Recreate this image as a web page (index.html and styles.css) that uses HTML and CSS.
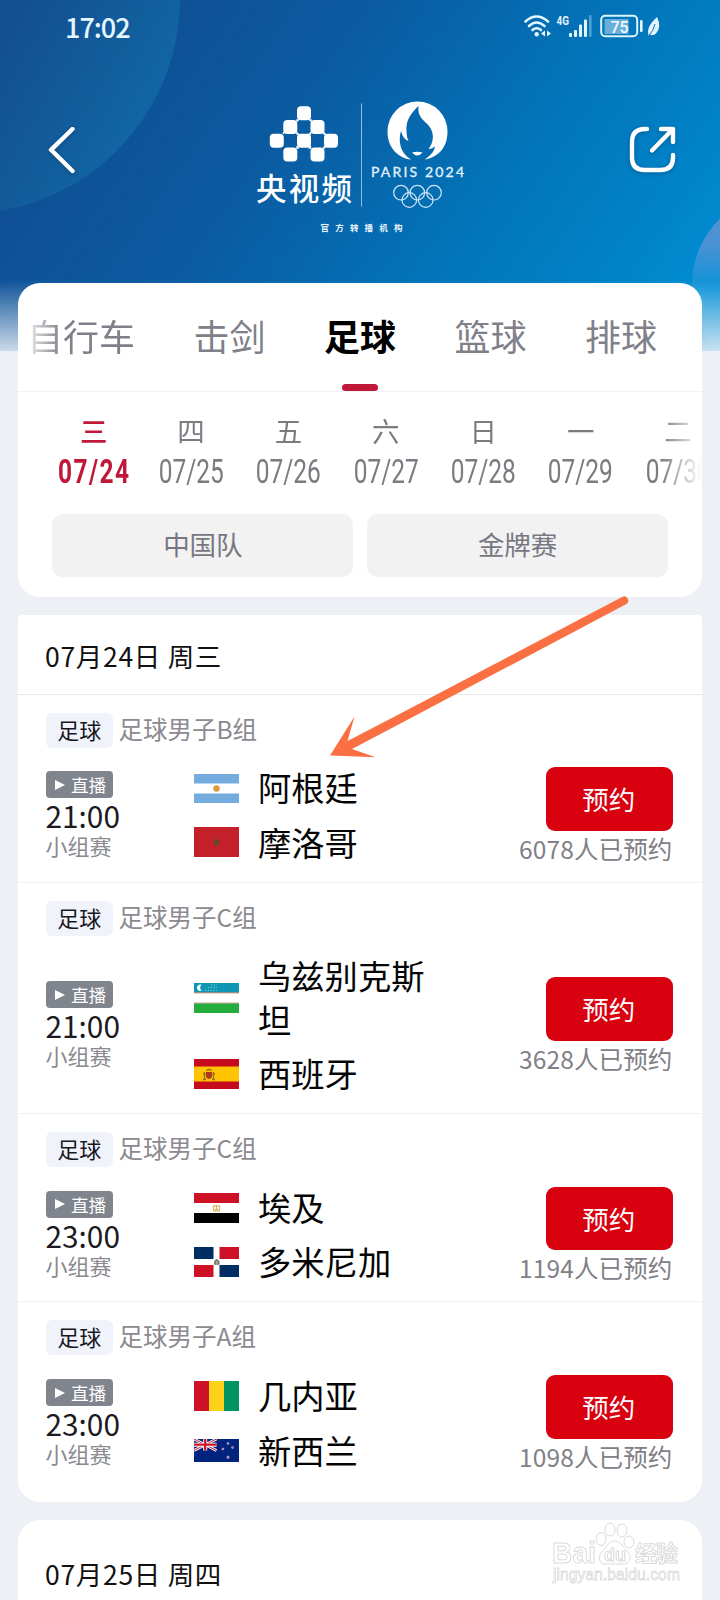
FILE: index.html
```html
<!DOCTYPE html>
<html lang="zh-CN">
<head>
<meta charset="utf-8">
<title>央视频 足球赛程</title>
<link rel="stylesheet" href="styles.css">
</head>
<body>
<div class="screen">
  <header class="hero">
    <svg class="hero-bg" width="720" height="352" viewBox="0 0 720 352">
      <defs>
        <linearGradient id="sky" gradientUnits="userSpaceOnUse" x1="120" y1="60" x2="600" y2="400">
          <stop offset="0" stop-color="#0f5096"/><stop offset=".3" stop-color="#0b5ba1"/><stop offset=".6" stop-color="#0371b6"/><stop offset="1" stop-color="#008acf"/>
        </linearGradient>
        <linearGradient id="orbL" gradientUnits="userSpaceOnUse" x1="10" y1="20" x2="150" y2="100">
          <stop offset="0" stop-color="#134f92"/><stop offset="1" stop-color="#1165a2"/>
        </linearGradient>
        <linearGradient id="orbR" x1="0" y1="0" x2="0" y2="1">
          <stop offset="0" stop-color="#5a90d2"/><stop offset=".28" stop-color="#4a92d4"/><stop offset=".52" stop-color="#0a93d8"/><stop offset="1" stop-color="#0a93d8"/>
        </linearGradient>
        <linearGradient id="fade" x1="0" y1="0" x2="0" y2="1">
          <stop offset="0" stop-color="#edf1f6" stop-opacity="0"/><stop offset="1" stop-color="#edf1f6" stop-opacity=".85"/>
        </linearGradient>
      </defs>
      <rect width="720" height="352" fill="url(#sky)"/>
      <circle cx="-36" cy="-2" r="216" fill="url(#orbL)"/>
      <circle cx="785" cy="285" r="93" fill="url(#orbR)"/>
      <rect y="280" width="720" height="71" fill="url(#fade)"/>
      <rect y="351" width="720" height="1" fill="#edf1f6"/>
    </svg>
    <div class="statusbar">
      <span class="clock">17:02</span>
      <svg class="status-icons" width="140" height="28" viewBox="0 0 140 28">
        <g fill="none" stroke="#e4f6ff" stroke-width="2.6" stroke-linecap="round">
          <path d="M2.500 8.500Q13.500-1.500 25 8.500"/><path d="M6 13Q13.500 6 21.500 13"/><path d="M9.500 17Q13.500 13.500 18 17"/>
        </g>
        <g fill="#e4f6ff">
          <circle cx="13.700" cy="21.300" r="2.200"/>
          <path d="M22 17.500v6l-4-3zM24 17.500v6l4-3z"/>
          <rect x="46" y="20" width="3" height="4" rx="1"/><rect x="51" y="17" width="3" height="7" rx="1"/><rect x="56" y="11.500" width="3" height="12.500" rx="1"/><rect x="61" y="6.500" width="3" height="17.500" rx="1"/>
          <rect x="66" y="2" width="2.600" height="22" rx="1" opacity=".35"/>
          <rect x="81.500" y="6" width="24" height="15" opacity=".45"/>
          <rect x="117" y="7" width="2.600" height="12" rx="1"/>
          <path d="M134 4Q139 14 133 20.500Q130 23.500 126.500 21.500L125.500 23Q122.500 14 134 4z"/>
        </g>
        <path d="M126 22.500Q130.500 18 132 11" stroke="#0a72ba" stroke-width="1" fill="none"/>
        <rect x="78.200" y="2.700" width="36" height="20.600" rx="4" fill="none" stroke="#dcf5f8" stroke-width="2"/>
        <text x="33.500" y="11.500" class="net" textLength="12.500" lengthAdjust="spacingAndGlyphs">4G</text>
        <text x="87.500" y="19.500" class="pct">75</text>
      </svg>
    </div>
    <div class="navbar">
      <svg class="back" width="28" height="48" viewBox="0 0 28 48"><path d="M24.500 2L3 22.800 24.500 44" fill="none" stroke="#fff" stroke-width="4.400" stroke-linecap="round" stroke-linejoin="round"/></svg>
      <svg class="brand" width="220" height="140" viewBox="250 95 220 140">
        <g fill="#fff">
          <rect x="297" y="106.300" width="14" height="14" rx="4"/><rect x="283.300" y="120" width="14" height="14" rx="4"/><rect x="310.500" y="120" width="14" height="14" rx="4"/><rect x="269.800" y="133.800" width="14" height="14" rx="4"/><rect x="297" y="133.800" width="14" height="14" rx="4"/><rect x="324" y="133.800" width="14" height="14" rx="4"/><rect x="283.300" y="147.500" width="14" height="14" rx="4"/><rect x="310.500" y="147.500" width="14" height="14" rx="4"/>
        </g>
        <path d="M299 120h-2v2M309 120h2v2M297 132v2h2M310.500 132v2h-2M297 146v2h2M310.500 146v2h-2M324 132v2h2M324 149v-2h2M283.500 132v2" fill="none" stroke="#fff" stroke-width="1.400"/>
        <text x="256" y="200" class="cctv" textLength="96">央视频</text>
        <path d="M361.500 103.500v103" stroke="#8dbde0" stroke-width="1"/>
        <path d="M410 159.500C396 157 387.500 146 387.500 131.500A30 30 0 0 1 447.500 131.500C447.500 146 440 157 424.500 159.500C432 155 434.500 150 435 146.500Q431.500 149 428.500 149C434 142 434.500 133 429 126C424 120 417 117 418.500 106C412 112 405.500 120 406.500 131Q406.500 137 408.500 141Q403 139 401 131C398 141 400 153 411 159.500z" fill="#fff"/>
        <path d="M412 152.500Q417 151 422.500 152.500Q417.500 158.500 412 152.500z" fill="#fff"/>
        <text x="371" y="177" class="paris" textLength="93">PARIS 2024</text>
        <g fill="none" stroke="#cfe6f6" stroke-width="1.200"><circle cx="401" cy="192.700" r="7.300"/><circle cx="417.300" cy="192.700" r="7.300"/><circle cx="434" cy="192.700" r="7.300"/><circle cx="409.300" cy="200" r="7.300"/><circle cx="425.700" cy="200" r="7.300"/></g>
        <text x="320.500" y="231" class="official" textLength="82">官方转播机构</text>
      </svg>
      <svg class="share" width="50" height="50" viewBox="0 0 50 50"><path d="M19 4H17Q4 4 4 17V33Q4 45 17 45H32Q45 45 45 33V30M33 4H45V17M44.500 4.500L24 25.500" fill="none" stroke="#fff" stroke-width="4.400" stroke-linecap="round" stroke-linejoin="round"/></svg>
    </div>
  </header>

  <main class="content">
    <section class="card filters">
      <nav class="tabs">
        <span>自行车</span><span>击剑</span><span class="active">足球</span><span>篮球</span><span>排球</span>
      </nav>
      <div class="dates">
        <div class="day on"><span>三</span><b>07/24</b></div>
        <div class="day"><span>四</span><b>07/25</b></div>
        <div class="day"><span>五</span><b>07/26</b></div>
        <div class="day"><span>六</span><b>07/27</b></div>
        <div class="day"><span>日</span><b>07/28</b></div>
        <div class="day"><span>一</span><b>07/29</b></div>
        <div class="day"><span>二</span><b>07/30</b></div>
      </div>
      <div class="chips"><button>中国队</button><button>金牌赛</button></div>
    </section>

    <section class="card schedule">
      <h2 class="date-title">07月24日 周三</h2>

      <article class="match">
        <div class="match-head"><span class="tag">足球</span><span class="group">足球男子B组</span></div>
        <div class="match-body">
          <div class="when"><span class="live"><i></i>直播</span><span class="time">21:00</span><span class="stage">小组赛</span></div>
          <div class="teams">
            <div class="team"><svg width="45" height="29" viewBox="0 0 45 29"><rect width="45" height="29" fill="#fff"/><path d="M0 0h45v9.500H0zM0 19.500h45V29H0z" fill="#74acdf"/><circle cx="22.500" cy="14.500" r="3.200" fill="#dc9a3c"/></svg><span>阿根廷</span></div>
            <div class="team"><svg width="45" height="30" viewBox="0 0 45 30"><rect width="45" height="30" fill="#c4202a"/><path d="M22.500 10.500l1.300 3.200 3.200.2-2.500 2.100.8 3.300-2.800-1.800-2.800 1.800.8-3.300-2.500-2.100 3.200-.2z" fill="#5e4a2c"/></svg><span>摩洛哥</span></div>
          </div>
          <div class="book"><button>预约</button><span>6078人已预约</span></div>
        </div>
      </article>

      <article class="match">
        <div class="match-head"><span class="tag">足球</span><span class="group">足球男子C组</span></div>
        <div class="match-body">
          <div class="when"><span class="live"><i></i>直播</span><span class="time">21:00</span><span class="stage">小组赛</span></div>
          <div class="teams">
            <div class="team"><svg width="45" height="30" viewBox="0 0 45 30"><rect width="45" height="30" fill="#fff"/><path d="M0 0h45v9.500H0z" fill="#0e97b2"/><path d="M0 9.500h45v.8H0zM0 19.700h45v.8H0z" fill="#a0573f"/><path d="M0 20.500h45V30H0z" fill="#24ac3c"/><path d="M7.500 1.800a3.200 3.200 0 1 0 0 5.800a3.800 3.800 0 0 1 0-5.800z" fill="#fff"/><path d="M11 7.300h12M14 4.600h9M17 2h6" stroke="#8fd0de" stroke-width="1" stroke-dasharray="1.200 1.600"/></svg><span>乌兹别克斯坦</span></div>
            <div class="team"><svg width="45" height="30" viewBox="0 0 45 30"><rect width="45" height="30" fill="#ffc400"/><path d="M0 0h45v7.500H0zM0 22.500h45V30H0z" fill="#c60b1e"/><path d="M12 13h6v5q-3 4-6 0z" fill="#ad3a20"/><path d="M12.500 11.500q2.500-2 5 0M10.500 13v8M19.500 13v8M9 20.500h3M18 20.500h3M9 15h2.500M18.500 15h2.500" fill="none" stroke="#9c6a25" stroke-width="1.300"/></svg><span>西班牙</span></div>
          </div>
          <div class="book"><button>预约</button><span>3628人已预约</span></div>
        </div>
      </article>

      <article class="match">
        <div class="match-head"><span class="tag">足球</span><span class="group">足球男子C组</span></div>
        <div class="match-body">
          <div class="when"><span class="live"><i></i>直播</span><span class="time">23:00</span><span class="stage">小组赛</span></div>
          <div class="teams">
            <div class="team"><svg width="45" height="30" viewBox="0 0 45 30"><rect width="45" height="30" fill="#fff"/><path d="M0 0h45v10H0z" fill="#ce1126"/><path d="M0 20h45v10H0z"/><path d="M19.500 12.500v5.500M25.500 12.500v5.500M19.500 18h6M22.500 12v3.500l-1.500 2M22.500 15l1.500 2.500M19.500 12.800h6" fill="none" stroke="#d9b565" stroke-width="1.200"/></svg><span>埃及</span></div>
            <div class="team"><svg width="45" height="30" viewBox="0 0 45 30"><rect width="45" height="30" fill="#fff"/><path d="M0 0h19.500v12H0zM25.500 18H45v12H25.500z" fill="#002d62"/><path d="M25.500 0H45v12H25.500zM0 18h19.500v12H0z" fill="#ce1126"/><path d="M20 17.700v-3.200q2.500-5 5.500 0v3.200z" fill="#71796a"/><rect x="21.700" y="14" width="1.800" height="3" fill="#b6a798"/></svg><span>多米尼加</span></div>
          </div>
          <div class="book"><button>预约</button><span>1194人已预约</span></div>
        </div>
      </article>

      <article class="match">
        <div class="match-head"><span class="tag">足球</span><span class="group">足球男子A组</span></div>
        <div class="match-body">
          <div class="when"><span class="live"><i></i>直播</span><span class="time">23:00</span><span class="stage">小组赛</span></div>
          <div class="teams">
            <div class="team"><svg width="45" height="30" viewBox="0 0 45 30"><path d="M0 0h15v30H0z" fill="#ce1126"/><path d="M15 0h15v30H15z" fill="#fcd116"/><path d="M30 0h15v30H30z" fill="#009460"/></svg><span>几内亚</span></div>
            <div class="team"><svg width="45" height="23" viewBox="0 0 45 23"><rect width="45" height="23" fill="#00247d"/><path d="M0 0L22.500 11.500M22.500 0L0 11.500" stroke="#fff" stroke-width="2.600"/><path d="M0 0L22.500 11.500M22.500 0L0 11.500" stroke="#cc142b" stroke-width="1"/><path d="M11.200 0v11.500M0 5.700h22.500" stroke="#fff" stroke-width="4"/><path d="M11.200 0v11.500M0 5.700h22.500" stroke="#cc142b" stroke-width="2.300"/><g fill="#b36b98" stroke="#dfe3f5" stroke-width=".5"><circle cx="34" cy="4.500" r="1"/><circle cx="28.800" cy="10" r="1"/><circle cx="38.500" cy="8.500" r="1"/><circle cx="34" cy="18.300" r="1.200"/></g></svg><span>新西兰</span></div>
          </div>
          <div class="book"><button>预约</button><span>1098人已预约</span></div>
        </div>
      </article>
    </section>

    <section class="card next-day"><h2 class="date-title">07月25日 周四</h2></section>
  </main>

  <svg class="pointer" width="310" height="170" viewBox="325 592 310 170"><path d="M330 755.500L354.500 716.500 347.500 741 400 713.800 622.500 596.700A4.200 4.200 0 0 1 626.500 604L400 723.800 352 749 375.500 757.300z" fill="#fb7043"/></svg>

  <svg class="watermark" width="136" height="68" viewBox="548 1518 136 68">
    <g fill="#fff" stroke="#d6d6d6" stroke-width="1">
      <ellipse cx="601" cy="1538" rx="5" ry="6.500"/><ellipse cx="610" cy="1528.500" rx="5" ry="6.500"/><ellipse cx="622" cy="1529.500" rx="5" ry="6.500"/><ellipse cx="629" cy="1541" rx="5" ry="6"/>
      <path d="M615 1540C621 1540 623 1547 628 1551C633 1557 629 1564 622 1563H607C599 1564 597 1556 602 1551C607 1547 608 1540 615 1540z"/>
      <text x="552" y="1562" class="wm-bai" textLength="44" lengthAdjust="spacingAndGlyphs">Bai</text>
      <text x="604" y="1560" class="wm-du" textLength="22" lengthAdjust="spacingAndGlyphs">du</text>
      <text x="635" y="1560" class="wm-cn" textLength="43">经验</text>
      <text x="553" y="1579" class="wm-url" textLength="127" lengthAdjust="spacingAndGlyphs">jingyan.baidu.com</text>
    </g>
  </svg>
</div>
</body>
</html>
```
FILE: styles.css
```css
* { box-sizing: border-box; }
html, body { margin: 0; height: 1600px; overflow: hidden; }
body, button { font-family: "Noto Sans CJK SC", "Noto Sans", sans-serif; }
.screen { position: relative; width: 720px; height: 1600px; overflow: hidden; background: #edf1f6; }

.hero { height: 283px; display: flex; flex-direction: column; }
.hero-bg { position: absolute; left: 0; top: 0; }
.statusbar, .navbar { position: relative; display: flex; justify-content: space-between; }
.statusbar { height: 56px; padding: 13px 57px 0 65px; align-items: flex-start; }
.clock { color: #e6f6ff; font-size: 27px; line-height: 28px; letter-spacing: -1px; font-weight: 500; }
.status-icons { display: block; }
.net { font: bold 13px "Roboto", sans-serif; fill: #e4f6ff; }
.pct { font: 500 16px "Roboto", sans-serif; fill: #f0faff; }
.navbar { padding: 39px 42px 0 47px; }
.back { margin-top: 32px; margin-left: 1px; filter: drop-shadow(0 1px 2px rgba(0,40,80,.4)); }
.brand { margin-left: 15px; }
.share { margin-top: 30px; filter: drop-shadow(0 1px 2px rgba(0,40,80,.4)); }
.cctv { font: 500 30.500px "Noto Sans CJK SC", sans-serif; fill: #fff; }
.paris { font: 14px "Lato", sans-serif; fill: #e4f3fd; stroke: #e4f3fd; stroke-width: .3px; }
.official { font: bold 8.500px "Noto Sans CJK SC", sans-serif; fill: #e8f4fc; }

.content { position: relative; display: flex; flex-direction: column; gap: 17.500px; padding: 0 18px; }
.card { background: #fff; border-radius: 22px; }

.filters { height: 314px; display: flex; flex-direction: column; }
.tabs { display: flex; gap: 58.500px; height: 109px; padding-left: 9px; border-bottom: 1px solid #f3f3f5; overflow: hidden;
  font-size: 36px; line-height: 105px; color: #80808a; white-space: nowrap; }
.tabs span { height: 108px; }
.tabs span:first-child { -webkit-mask-image: linear-gradient(90deg, rgba(0,0,0,.15), #000 32%); mask-image: linear-gradient(90deg, rgba(0,0,0,.15), #000 32%); }
.tabs .active { position: relative; color: #000; font-weight: bold; }
.tabs .active::after { content: ""; position: absolute; left: 18px; bottom: 0; width: 36px; height: 7px; border-radius: 4px; background: #bf1838; }
.dates { display: flex; height: 122px; padding: 20px 0 0 27px; overflow: hidden; color: #7b7b82;
  -webkit-mask-image: linear-gradient(90deg, #000 94%, transparent 100%); mask-image: linear-gradient(90deg, #000 94%, transparent 100%); }
.day { flex: 0 0 97.400px; width: 97.400px; min-width: 0; display: flex; flex-direction: column; align-items: center; }
.day span { font-size: 27.500px; line-height: 37px; }
.day b { font: 400 34px/44px "Roboto", sans-serif; transform: scaleX(.72); white-space: nowrap; }
.day.on { color: #bf1838; }
.day.on span { font-weight: 500; }
.day.on b { font-weight: 700; letter-spacing: 2px; margin-left: 2px; }
.chips { display: flex; gap: 14px; padding: 0 34.500px 0 34px; }
.chips button { flex: 1; height: 63px; border: 0; border-radius: 10px; background: #f2f2f2; color: #777782; font-size: 26.500px; line-height: 60px; padding: 0 0 3px 1px; }

.schedule { height: 887.500px; border-radius: 4px 4px 22px 22px; }
.date-title { margin: 0; padding-left: 27px; height: 80px; border-bottom: 1px solid #e5e9eb; font-size: 26.500px; letter-spacing: .7px; font-weight: 400; line-height: 81px; color: #111; }
.match { padding: 18px 29.500px 18.700px 27.500px; border-bottom: 1px solid #eef1f3; }
.match:last-child { border-bottom: 0; }
.match-head { display: flex; align-items: center; gap: 5.500px; height: 35px; }
.tag { width: 67.500px; height: 35px; border-radius: 6px; background: #f1f3fa; font-size: 22px; line-height: 32px; text-align: center; color: #17171f; }
.group { font-size: 24.500px; line-height: 33px; padding-bottom: 4px; color: #8a8a90; }
.match-body { display: flex; align-items: center; margin-top: 18.500px; }
.when { width: 148.500px; display: flex; flex-direction: column; align-items: flex-start; padding-top: .5px; }
.live { display: flex; align-items: center; gap: 6.500px; width: 67.500px; height: 27px; padding-left: 9px; border-radius: 4px; background: #80848c; color: #fff; font-size: 17.600px; line-height: 27px; }
.live i { border-left: 10.500px solid #fff; border-top: 5.500px solid transparent; border-bottom: 5.500px solid transparent; }
.time { font-size: 29.800px; line-height: 34px; color: #1b1b1f; }
.stage { font-size: 22px; line-height: 26px; color: #8a8a90; }
.teams { width: 240px; display: flex; flex-direction: column; gap: 11.500px; }
.team { display: flex; align-items: center; }
.team svg { flex: none; margin: 2px 19px 0 0; }
.team span { width: 168px; font-size: 33.300px; line-height: 43.200px; color: #050505; margin-top: -1px; }
.team + .team span { margin-top: 0; }
.book { flex: 1; display: flex; flex-direction: column; align-items: flex-end; padding-top: 1.300px; margin-bottom: -3.700px; }
.book button { width: 126.500px; height: 63.500px; padding: 0 1px 1px 0; border: 0; border-radius: 9px; background: #d9000f; color: #fff; font-size: 26.500px; line-height: 61px; }
.book span { font-size: 24.500px; line-height: 36px; color: #808086; white-space: nowrap; letter-spacing: .15px; }
.next-day { height: 120px; padding-top: 13.500px; }
.next-day .date-title { border: 0; }

.pointer { position: absolute; left: 325px; top: 592px; }
.watermark { position: absolute; left: 548px; top: 1519px; opacity: .9; }
.wm-bai { font: bold 30px "Liberation Sans", sans-serif; }
.wm-du { font: bold 18px "Liberation Sans", sans-serif; }
.wm-cn { font: bold 22px "Noto Sans CJK SC", sans-serif; }
.wm-url { font: 16px "Liberation Sans", sans-serif; stroke-width: .8px; }
```
